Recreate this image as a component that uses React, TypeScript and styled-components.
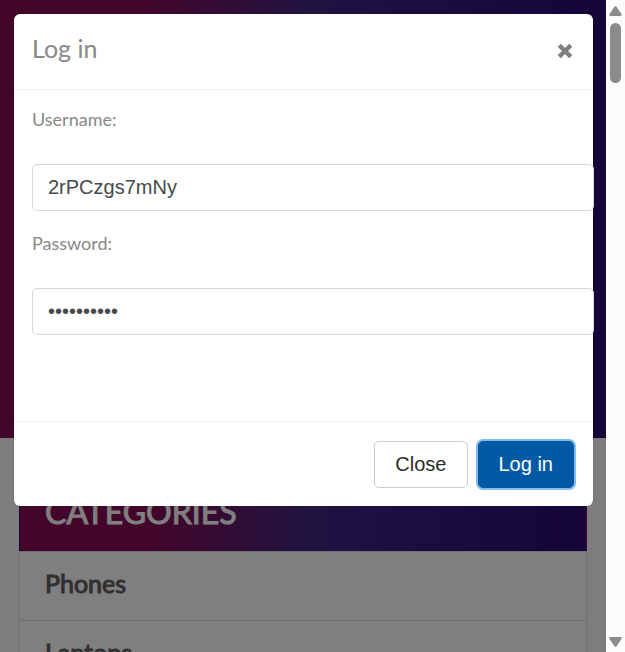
import React, { useState } from "react";
import styled, { createGlobalStyle } from "styled-components";

const GlobalStyle = createGlobalStyle`
  *, *::before, *::after { box-sizing: border-box; }
  html, body { margin: 0; height: 100%; overflow: hidden; }
  body { font-family: Lato, sans-serif; font-size: 18px; color: #888; }
  #root { height: 100%; }
`;

const brandGradient = "linear-gradient(90deg, #870b54 0%, #870b54 23%, #46257f 49%, #3f2785 52%, #2a0a73 100%)";

const Window = styled.div`
  display: grid;
  grid-template-columns: minmax(0, 1fr) 19px;
  height: 100vh;
  overflow: hidden;
`;

const Viewport = styled.div`
  position: relative;
  overflow: hidden;
  background: #fafbfe;
`;

const Hero = styled.header`
  height: 438px;
  background: ${brandGradient};
`;

const Categories = styled.nav`
  margin: 44px 19px 0;
  border: 1px solid #dee2e6;
  border-top: 0;
  background: #fff;
`;

const CategoriesTitle = styled.h2`
  margin: 0 -1px;
  padding: 9px 25px 19px;
  border: solid transparent;
  border-width: 0 1px;
  background: ${brandGradient};
  color: #fff;
  font-size: 32px;
  font-weight: 400;
  line-height: 41px;
  -webkit-text-stroke: 1px currentColor;
`;

const CategoryLink = styled.a`
  display: block;
  padding: 13px 25px 19px;
  border-top: 1px solid #dee2e6;
  color: #606060;
  font-size: 25px;
  font-weight: 400;
  line-height: 36px;
  text-decoration: none;
  -webkit-text-stroke: 1px currentColor;
`;

const Backdrop = styled.div`
  position: absolute;
  inset: 0;
  padding: 14px 13px 14px 14px;
  background: rgba(0, 0, 0, 0.5);
`;

const Dialog = styled.form`
  border-radius: 6px;
  background: #fff;
  box-shadow: 0 0 1px rgba(0, 0, 0, 0.5);
`;

const DialogHeader = styled.div`
  display: flex;
  align-items: center;
  justify-content: space-between;
  height: 76px;
  padding: 0 18px 4px;
  border-bottom: 1px solid #eceeef;
`;

const DialogTitle = styled.h1`
  margin: 0;
  padding-bottom: 4px;
  font-size: 25px;
  font-weight: 400;
  line-height: 36px;
`;

const CloseIcon = styled.button`
  display: flex;
  padding: 4px 2px 2px;
  border: 0;
  background: none;
  color: #808080;
`;

const DialogBody = styled.div`
  display: flex;
  flex-direction: column;
  padding: 16px 18px 86px;
`;

const Field = styled.div`
  display: flex;
  flex-direction: column;
  & + & { margin-top: 19px; }
`;

const Label = styled.label`
  margin-bottom: 32px;
  font-size: 18px;
  line-height: 26px;
`;

const TextInput = styled.input`
  width: calc(100% + 19px);
  height: 47px;
  padding: 0 15px;
  border: 1px solid #d5d7d9;
  border-radius: 5px;
  outline: 0;
  background: #fff;
  color: #464a4c;
  font-family: "Liberation Sans", Arial, sans-serif;
  font-size: 20px;
`;

const DialogFooter = styled.div`
  display: flex;
  justify-content: flex-end;
  gap: 10px;
  padding: 19px 19px 18px;
  border-top: 1px solid #eceeef;
`;

const Button = styled.button<{ $primary?: boolean }>`
  height: 47px;
  padding: 0 20px;
  border: 1px solid ${(p) => (p.$primary ? "#025aa5" : "#ccc")};
  border-radius: 5px;
  background: ${(p) => (p.$primary ? "#025aa5" : "#fff")};
  box-shadow: ${(p) => (p.$primary ? "0 0 0 2px #82bbee" : "none")};
  color: ${(p) => (p.$primary ? "#fff" : "#292b2c")};
  font-family: "Liberation Sans", Arial, sans-serif;
  font-size: 20px;
`;

const Scrollbar = styled.div`
  display: flex;
  flex-direction: column;
  align-items: center;
  padding: 6px 0 5px;
  background: #fcfcfc;
  color: #8b8b8b;
  svg { display: block; }
`;

const ScrollThumb = styled.div`
  width: 11px;
  height: 60px;
  margin: 7px 0 auto;
  border-radius: 6px;
  background: #8b8b8b;
`;

export default function App() {
  const [username, setUsername] = useState("2rPCzgs7mNy");
  const [password, setPassword] = useState("abcdefghij");

  return (
    <>
      <GlobalStyle />
      <Window>
        <Viewport>
          <Hero />
          <Categories>
            <CategoriesTitle>CATEGORIES</CategoriesTitle>
            <CategoryLink href="#phones">Phones</CategoryLink>
            <CategoryLink href="#laptops">Laptops</CategoryLink>
          </Categories>
          <Backdrop>
            <Dialog role="dialog" aria-labelledby="login-title" onSubmit={(e) => e.preventDefault()}>
              <DialogHeader>
                <DialogTitle id="login-title">Log in</DialogTitle>
                <CloseIcon type="button" aria-label="Close dialog">
                  <svg width="16" height="16" viewBox="0 0 16 16" fill="none" stroke="currentColor" strokeWidth="4.4">
                    <path d="M2.2 2.2 13.8 13.8M13.8 2.2 2.2 13.8" />
                  </svg>
                </CloseIcon>
              </DialogHeader>
              <DialogBody>
                <Field>
                  <Label htmlFor="username">Username:</Label>
                  <TextInput id="username" value={username} onChange={(e) => setUsername(e.target.value)} />
                </Field>
                <Field>
                  <Label htmlFor="password">Password:</Label>
                  <TextInput id="password" type="password" value={password} onChange={(e) => setPassword(e.target.value)} />
                </Field>
              </DialogBody>
              <DialogFooter>
                <Button type="button">Close</Button>
                <Button type="submit" $primary>Log in</Button>
              </DialogFooter>
            </Dialog>
          </Backdrop>
        </Viewport>
        <Scrollbar aria-hidden="true">
          <svg width="13" height="10" viewBox="0 0 13 10" fill="currentColor">
            <path d="M5.5 .7Q6.5-.6 7.5.7L12.5 8Q13.2 10 11.5 10H1.5Q-.2 10 .5 8Z" />
          </svg>
          <ScrollThumb />
          <svg width="13" height="10" viewBox="0 0 13 10" fill="currentColor">
            <path d="M5.5 9.3Q6.5 10.6 7.5 9.3L12.5 2Q13.2 0 11.5 0H1.5Q-.2 0 .5 2Z" />
          </svg>
        </Scrollbar>
      </Window>
    </>
  );
}
